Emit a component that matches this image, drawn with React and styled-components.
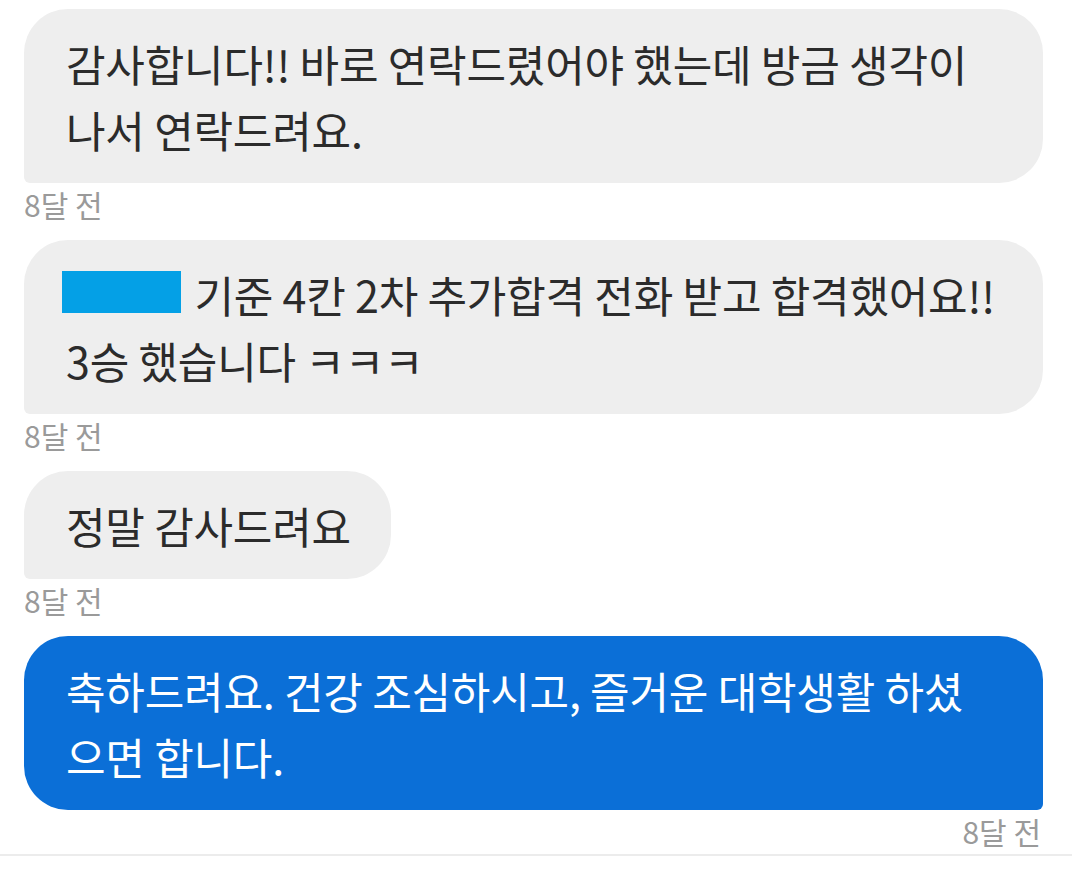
import React from 'react';
import styled, { createGlobalStyle } from 'styled-components';

const GlobalStyle = createGlobalStyle`
  html, body {
    margin: 0;
    padding: 0;
    background: #fff;
  }
  body {
    font-family: 'Noto Sans CJK KR', 'Noto Sans', sans-serif;
  }
`;

const Thread = styled.div`
  width: 1072px;
  height: 873px;
  overflow: hidden;
  box-sizing: border-box;
  padding: 9px 29px 0 24px;
  display: flex;
  flex-direction: column;
`;

const Message = styled.div`
  display: flex;
  flex-direction: column;
  align-items: ${(p) => (p.$mine ? 'flex-end' : 'flex-start')};
  margin-bottom: ${(p) => (p.$mine ? '5px' : '18px')};
`;

const Bubble = styled.div`
  box-sizing: border-box;
  width: ${(p) => (p.$full ? '1019px' : 'auto')};
  padding: 21px 40px 21px 42px;
  font-size: 43px;
  line-height: 66px;
  letter-spacing: -0.2px;
  white-space: nowrap;
  color: ${(p) => (p.$mine ? '#ffffff' : '#2b2b2b')};
  background: ${(p) => (p.$mine ? '#0b6fd7' : '#eeeeee')};
  border-radius: ${(p) => (p.$mine ? '44px 44px 6px 44px' : '44px 44px 44px 6px')};
`;

const Redacted = styled.span`
  display: inline-block;
  width: 119px;
  height: 42px;
  background: #04a0e6;
  vertical-align: 0;
  margin-left: -4px;
  margin-right: 4px;
`;

const Time = styled.div`
  font-size: 30px;
  line-height: 36px;
  color: #9a9a9a;
  margin-top: 3px;
  padding: 0 2px 0 0;
`;

const Divider = styled.div`
  margin: 0 -29px 0 -24px;
  height: 2px;
  background: #ececec;
`;

const messages = [
  {
    id: 1,
    full: true,
    lines: ['감사합니다!! 바로 연락드렸어야 했는데 방금 생각이', '나서 연락드려요.'],
  },
  {
    id: 2,
    full: true,
    redacted: true,
    lines: [' 기준 4칸 2차 추가합격 전화 받고 합격했어요!!', '3승 했습니다 ㅋㅋㅋ'],
  },
  { id: 3, lines: ['정말 감사드려요'] },
  {
    id: 4,
    full: true,
    mine: true,
    lines: ['축하드려요. 건강 조심하시고, 즐거운 대학생활 하셨', '으면 합니다.'],
  },
];

const App = () => {
  return (
    <>
      <GlobalStyle />
      <Thread>
        {messages.map((m) => (
          <Message key={m.id} $mine={m.mine}>
            <Bubble $mine={m.mine} $full={m.full}>
              {m.redacted && <Redacted />}
              {m.lines.map((line, i) => (
                <React.Fragment key={i}>
                  {i > 0 && <br />}
                  {line}
                </React.Fragment>
              ))}
            </Bubble>
            <Time>8달 전</Time>
          </Message>
        ))}
        <Divider />
      </Thread>
    </>
  );
};

export default App;
